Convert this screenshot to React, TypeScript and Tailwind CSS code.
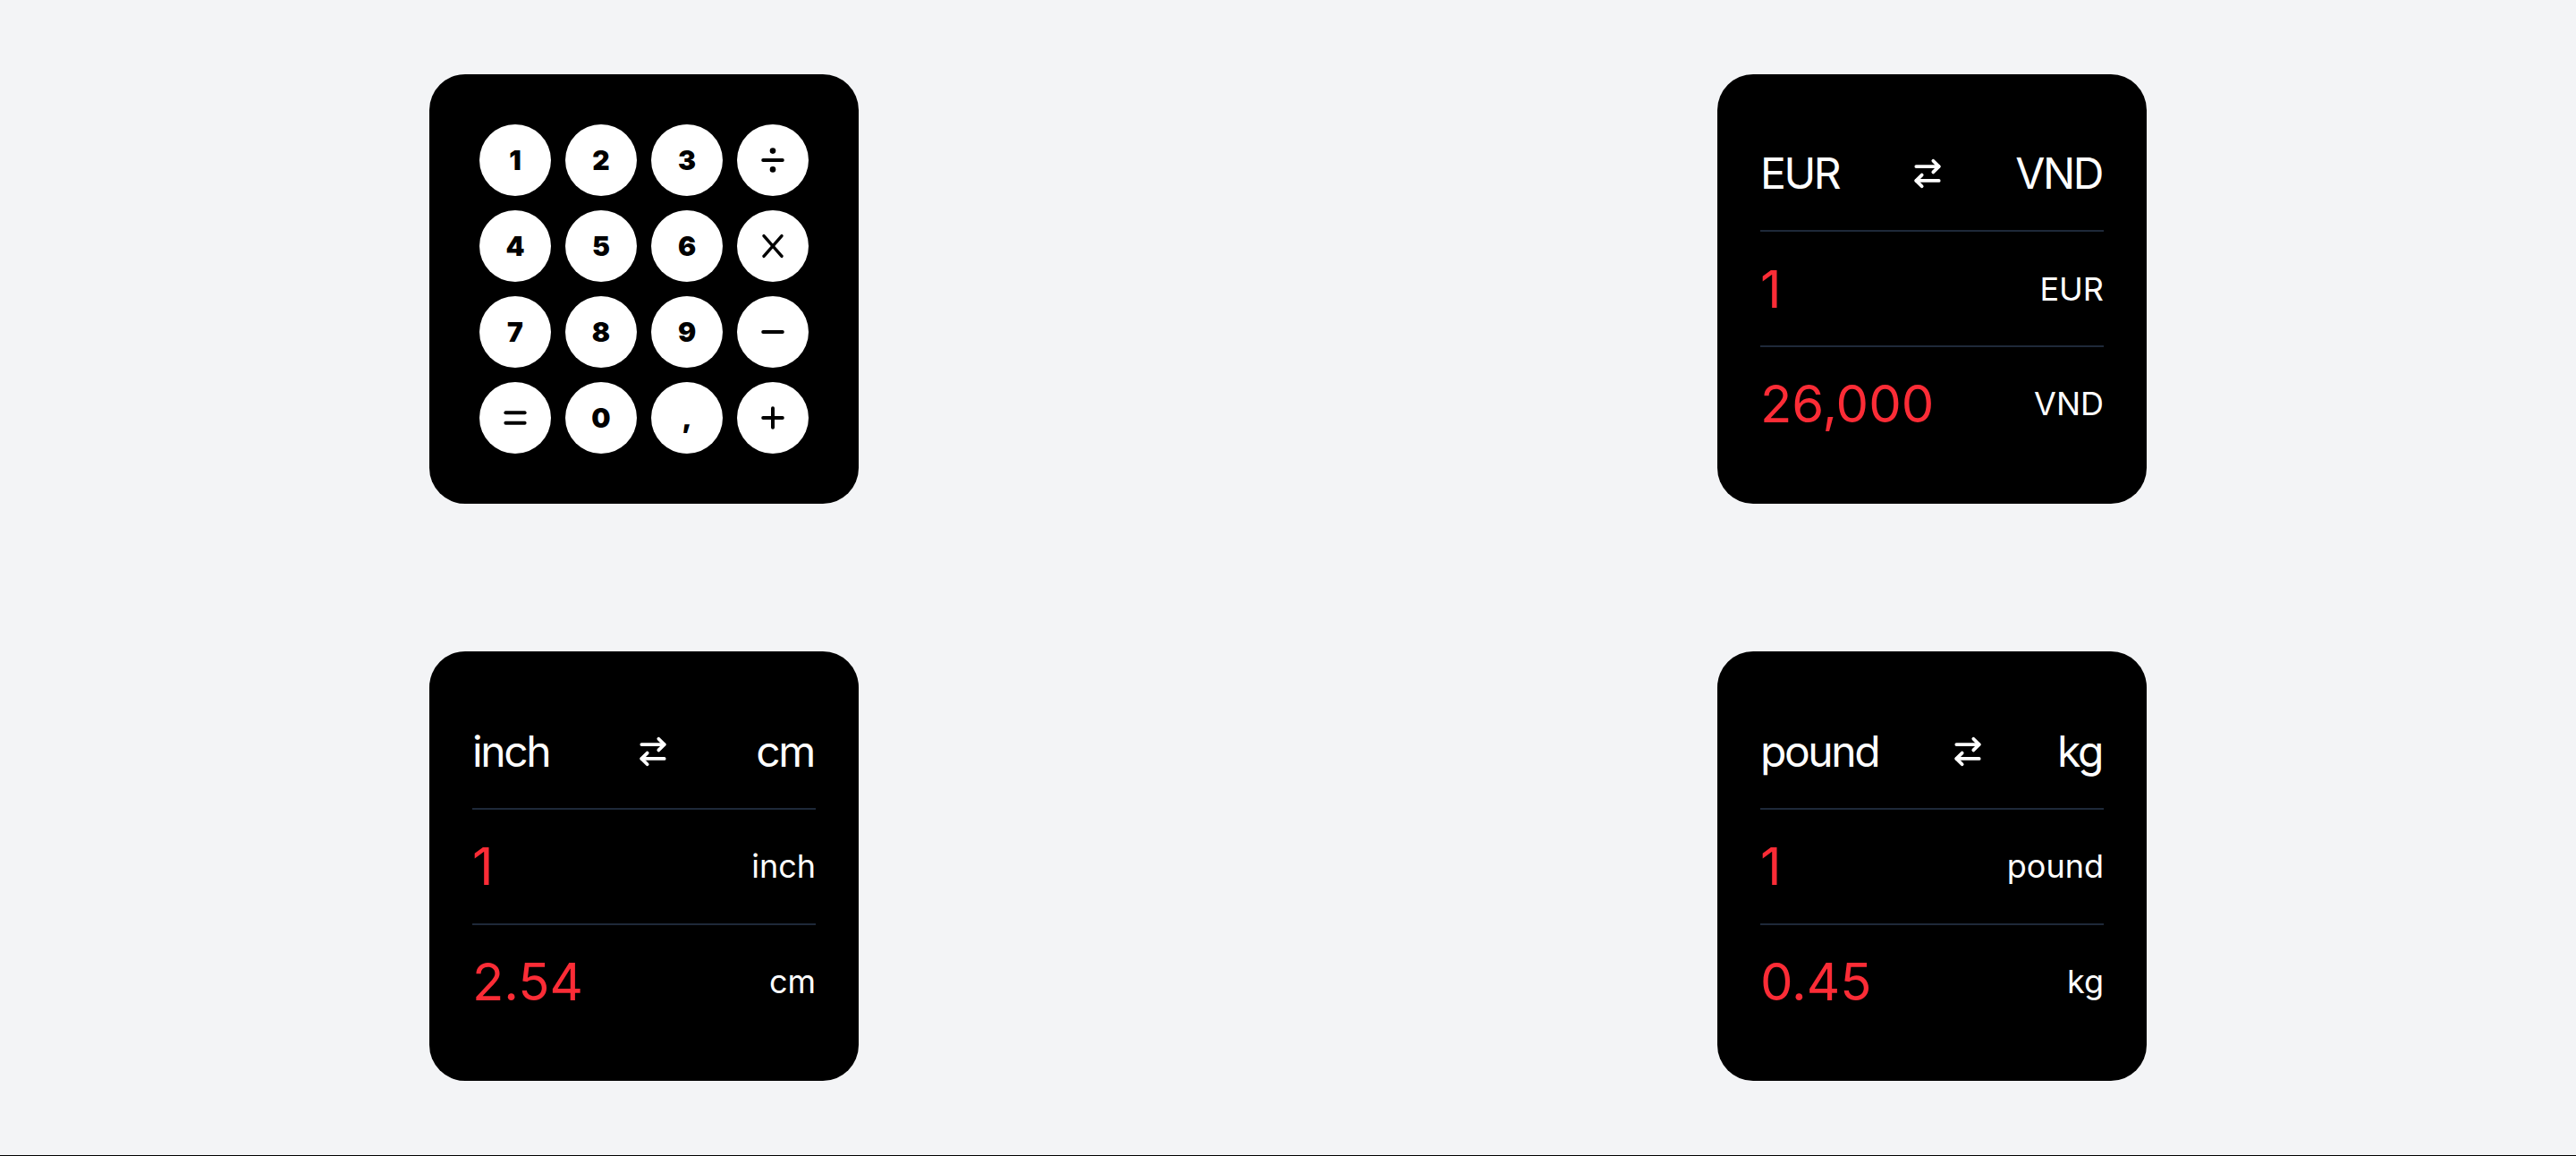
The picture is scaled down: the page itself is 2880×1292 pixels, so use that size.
import React from "react";
import { ArrowRightLeft } from "lucide-react";

const Op = ({ kind }: { kind: string }) => {
  const common = {
    stroke: "currentColor",
    strokeWidth: 4,
    strokeLinecap: "round" as const,
    fill: "none",
  };
  return (
    <svg width="28" height="28" viewBox="0 0 28 28" className="text-black">
      {kind === "div" && (
        <>
          <line x1="3.2" y1="14" x2="24.8" y2="14" {...common} />
          <circle cx="14" cy="3.6" r="3.3" fill="currentColor" />
          <circle cx="14" cy="24.4" r="3.3" fill="currentColor" />
        </>
      )}
      {kind === "mul" && (
        <>
          <line x1="4" y1="2.6" x2="24" y2="25.4" {...common} strokeWidth={3.4} />
          <line x1="24" y1="2.6" x2="4" y2="25.4" {...common} strokeWidth={3.4} />
        </>
      )}
      {kind === "sub" && <line x1="3.2" y1="14" x2="24.8" y2="14" {...common} />}
      {kind === "add" && (
        <>
          <line x1="3.2" y1="14" x2="24.8" y2="14" {...common} />
          <line x1="14" y1="3.2" x2="14" y2="24.8" {...common} />
        </>
      )}
      {kind === "eq" && (
        <>
          <line x1="3.4" y1="8.2" x2="24.6" y2="8.2" {...common} />
          <line x1="3.4" y1="19.8" x2="24.6" y2="19.8" {...common} />
        </>
      )}
    </svg>
  );
};

const keys: { label?: string; op?: string }[] = [
  { label: "1" },
  { label: "2" },
  { label: "3" },
  { op: "div" },
  { label: "4" },
  { label: "5" },
  { label: "6" },
  { op: "mul" },
  { label: "7" },
  { label: "8" },
  { label: "9" },
  { op: "sub" },
  { op: "eq" },
  { label: "0" },
  { label: "," },
  { op: "add" },
];

const Calculator = () => (
  <div className="w-[480px] h-[480px] rounded-[40px] bg-black p-14">
    <div className="grid grid-cols-4 gap-4">
      {keys.map((k, i) => (
        <div
          key={i}
          className="w-20 h-20 rounded-full bg-white flex items-center justify-center text-black text-[30px] leading-none font-black"
        >
          {k.op ? <Op kind={k.op} /> : k.label}
        </div>
      ))}
    </div>
  </div>
);

const Converter = ({
  from,
  to,
  value,
  result,
}: {
  from: string;
  to: string;
  value: string;
  result: string;
}) => (
  <div className="w-[480px] h-[480px] rounded-[40px] bg-black p-12 flex flex-col text-white">
    <div className="flex-1 flex items-center justify-between border-b-2 border-gray-800">
      <span className="text-5xl leading-none tracking-[-2.4px]">{from}</span>
      <ArrowRightLeft size={38} strokeWidth={2.4} />
      <span className="text-5xl leading-none tracking-[-2.4px] mr-[2px]">{to}</span>
    </div>
    <div className="flex-1 flex items-center justify-between border-b-2 border-gray-800">
      <span className="text-[58px] leading-none text-red-500">{value}</span>
      <span className="text-4xl leading-none">{from}</span>
    </div>
    <div className="flex-1 flex items-center justify-between">
      <span className="text-[58px] leading-none text-red-500">{result}</span>
      <span className="text-4xl leading-none">{to}</span>
    </div>
  </div>
);

export default function App() {
  return (
    <div className="h-[1292px] bg-gray-100 border-b border-black grid grid-cols-2 grid-rows-2 place-items-center font-['Inter','Liberation_Sans',sans-serif]">
      <Calculator />
      <Converter from="EUR" to="VND" value="1" result="26,000" />
      <Converter from="inch" to="cm" value="1" result="2.54" />
      <Converter from="pound" to="kg" value="1" result="0.45" />
    </div>
  );
}
